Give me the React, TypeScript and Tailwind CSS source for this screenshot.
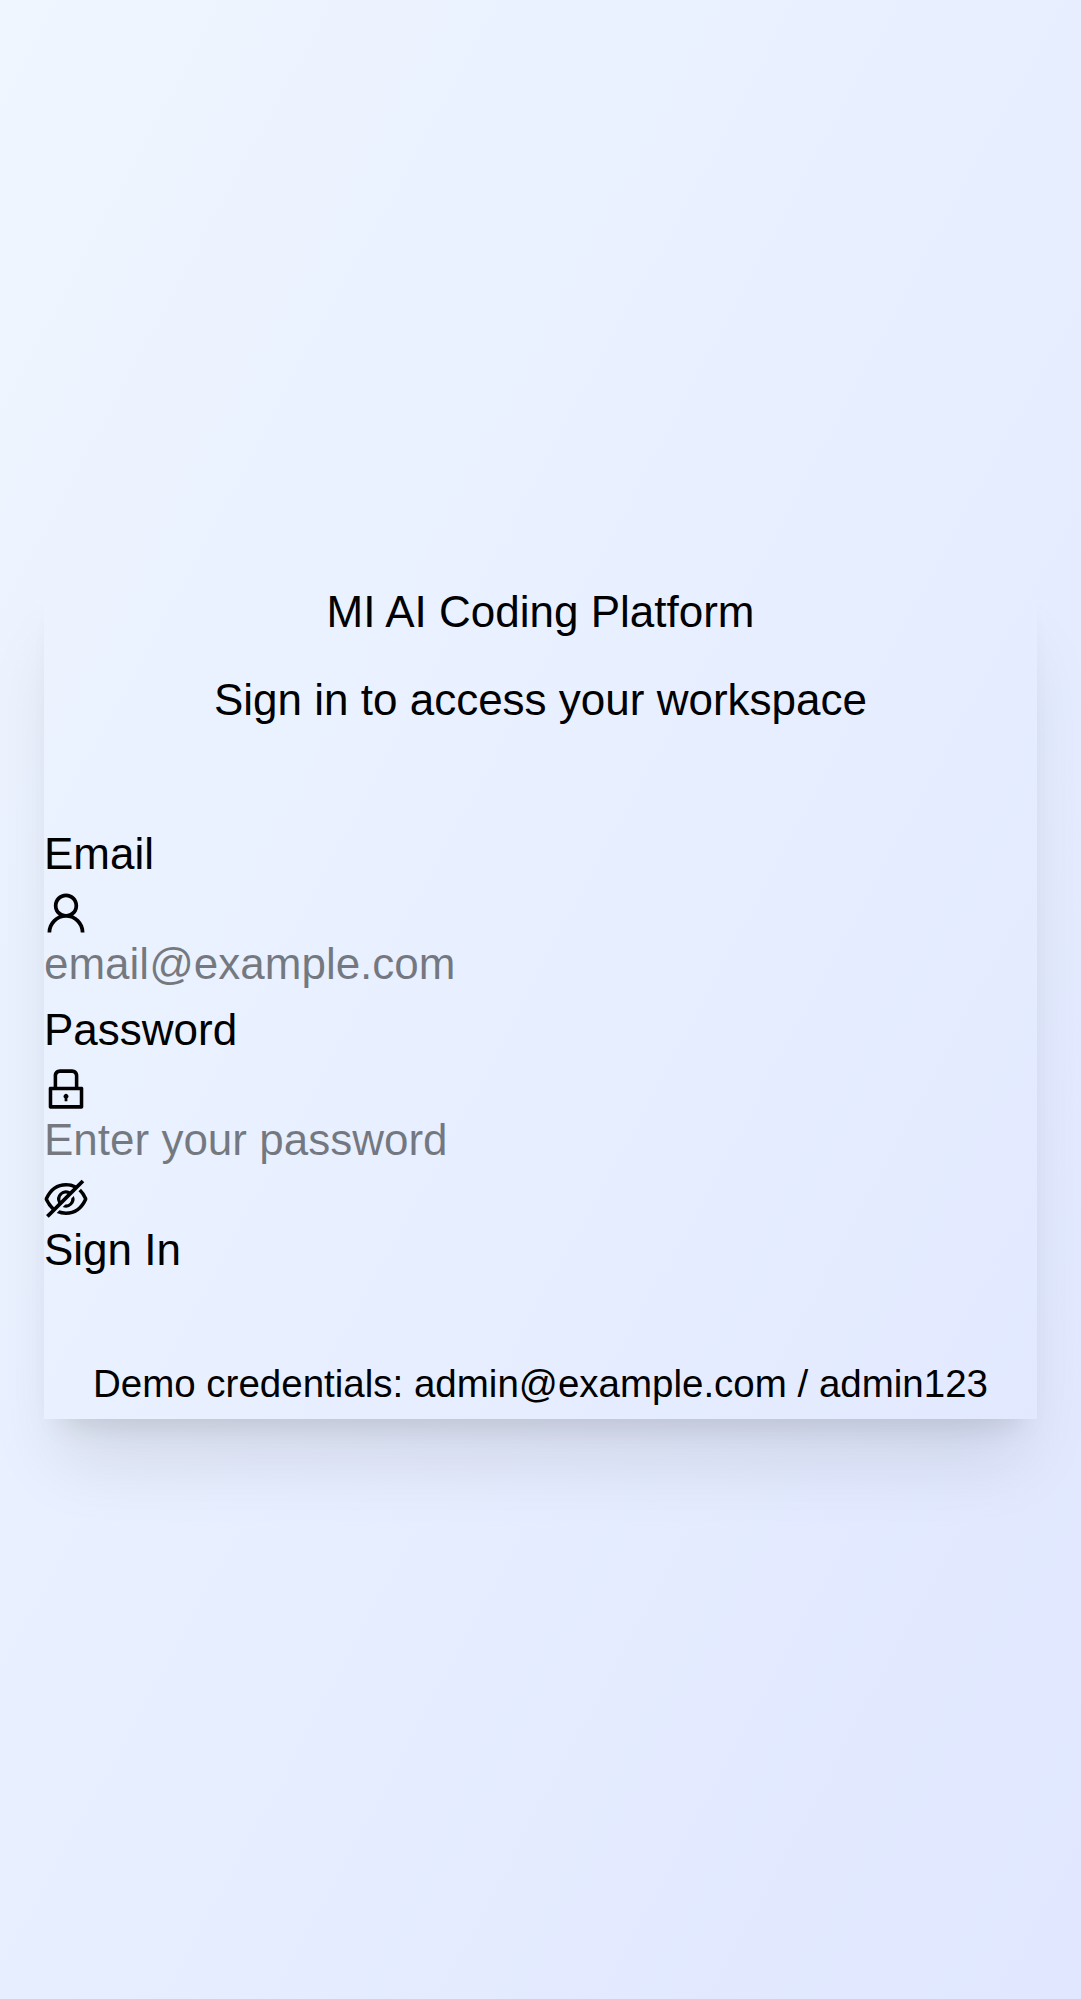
import { AiOutlineEyeInvisible, AiOutlineLock, AiOutlineUser } from "react-icons/ai";

const fieldClass = "mb-1 block h-[58px] w-full bg-transparent p-0 leading-[58px] outline-none";
const iconClass = "block size-11";
const iconBox = "64 64 896 896";

export default function App() {
  return (
    <div className="flex h-[1999px] items-center justify-center bg-gradient-to-br from-blue-50 to-indigo-100 pb-px font-['Liberation_Sans',sans-serif] text-[44px] leading-[66px] text-black">
      <div className="w-[993px] pb-px shadow-[0_55px_68.75px_-13.75px_rgba(0,0,0,0.1),0_22px_27.5px_-16.5px_rgba(0,0,0,0.1)]">
        <div className="mb-[88px] text-center">
          <h1 className="mb-[22px]">MI AI Coding Platform</h1>
          <p>Sign in to access your workspace</p>
        </div>
        <form>
          <label htmlFor="email" className="block pb-1">Email</label>
          <AiOutlineUser viewBox={iconBox} className={iconClass} />
          <input id="email" type="email" placeholder="email@example.com" className={fieldClass} />
          <label htmlFor="password" className="block pb-1">Password</label>
          <AiOutlineLock viewBox={iconBox} className={iconClass} />
          <input id="password" type="password" placeholder="Enter your password" className={fieldClass} />
          <div className="-mb-1 pt-1">
            <AiOutlineEyeInvisible viewBox={iconBox} className={iconClass} />
          </div>
          <button type="submit" className="block">Sign In</button>
        </form>
        <p className="mt-[66px] text-center text-[38.5px] leading-[69px]">
          Demo credentials: admin@example.com / admin123
        </p>
      </div>
    </div>
  );
}
